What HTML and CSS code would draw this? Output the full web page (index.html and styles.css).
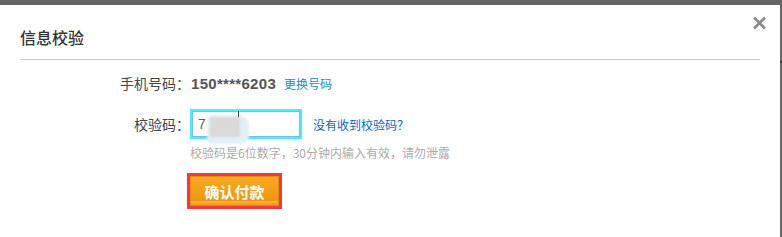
FILE: index.html
```html
<!DOCTYPE html>
<html lang="zh-CN">
<head>
    <meta charset="UTF-8">
    <title>信息校验</title>
    <link rel="stylesheet" href="styles.css">
</head>
<body>
    <div class="dialog">
        <div class="dialog-head">
            <h2>信息校验</h2>
        </div>
        <a class="close-btn" href="#" title="关闭">
            <svg width="15" height="14" viewBox="0 0 15 14">
                <path d="M2 1.5 L13 12.5 M13 1.5 L2 12.5" stroke="#8a8a8a" stroke-width="2.6" fill="none"/>
            </svg>
        </a>
        <span class="edge-mark"></span>

        <div class="verify-form">
            <div class="row phone-row">
                <label>手机号码：</label>
                <div class="field">
                    <span class="phone">150****6203</span>
                    <a href="#" class="link change-link">更换号码</a>
                </div>
            </div>

            <div class="row code-row">
                <label>校验码：</label>
                <div class="field">
                    <div class="code-wrap">
                        <input type="text" class="code-input" value="7" readonly>
                        <!-- mosaic over the rest of the code -->
                        <span class="smudge"></span>
                        <span class="caret"></span>
                    </div>
                    <a href="#" class="link resend-link">没有收到校验码？</a>
                </div>
            </div>

            <div class="row hint-row">
                <span></span>
                <p class="hint">校验码是6位数字，30分钟内输入有效，请勿泄露</p>
            </div>

            <div class="row btn-row">
                <span></span>
                <div class="field">
                    <button class="pay-btn">确认付款</button>
                </div>
            </div>
        </div>
    </div>
</body>
</html>
```

FILE: styles.css
```css
html, body {
    margin: 0;
    height: 100%;
}

body {
    background-color: #666;
    font-family: "Noto Sans CJK SC", "Liberation Sans", sans-serif;
    overflow: hidden;
}

.dialog {
    position: relative;
    margin: 5px 2px 0 0;
    height: 232px;
    background-color: #fff;
}

.dialog-head {
    margin: 0 20px;
    height: 54px;
    border-bottom: 1px solid #ccc;
}

.dialog-head h2 {
    margin: 0;
    padding-top: 21px;
    font-size: 16px;
    line-height: 22px;
    font-weight: 500;
    color: #333;
}

.close-btn {
    position: absolute;
    top: 11px;
    right: 13px;
    width: 15px;
    height: 14px;
    display: block;
}

.close-btn svg {
    display: block;
}

.edge-mark {
    position: absolute;
    right: -2px;
    top: 56px;
    width: 2px;
    height: 2px;
    background-color: #334;
}

.verify-form {
    padding-top: 13px;
}

.row {
    display: grid;
    grid-template-columns: 190px 1fr;
    align-items: center;
}

.row label {
    text-align: right;
    font-size: 14px;
    color: #444;
    white-space: nowrap;
}

.field {
    display: flex;
    align-items: center;
}

.phone-row {
    height: 20px;
}

.phone {
    font-family: "Liberation Sans", sans-serif;
    font-weight: bold;
    font-size: 15px;
    letter-spacing: 0.3px;
    color: #555;
    margin-left: 1px;
}

.link {
    font-size: 12px;
    text-decoration: none;
}

.change-link {
    color: #1a8bd0;
    margin-left: 8px;
}

.code-row {
    margin-top: 16px;
    height: 30px;
}

.code-wrap {
    position: relative;
    width: 112px;
    height: 30px;
}

.code-input {
    width: 112px;
    height: 30px;
    box-sizing: border-box;
    margin: 0;
    padding: 0 0 0 6px;
    border: 2px solid #3ef3ff;
    box-shadow: inset 0 0 0 1px #7ab8ff;
    outline: none;
    font-family: "Liberation Sans", sans-serif;
    font-size: 14px;
    color: #6b5a4a;
}

.smudge {
    position: absolute;
    left: 17px;
    top: 6px;
    width: 42px;
    height: 29px;
    background:
        linear-gradient(#dadada, #dadada) 3px 2px / 30px 20px no-repeat,
        #e2f0f6;
    border-radius: 6px 10px 8px 4px;
    filter: blur(0.8px);
}

.caret {
    position: absolute;
    left: 48px;
    top: 2px;
    width: 1px;
    height: 6px;
    background-color: #444;
}

.resend-link {
    color: #0a66cc;
    margin-left: 11px;
}

.hint-row {
    margin-top: 5px;
}

.hint {
    margin: 0;
    font-size: 12px;
    line-height: 18px;
    color: #aaa;
}

.btn-row {
    margin-top: 14px;
}

.pay-btn {
    width: 89px;
    height: 30px;
    padding: 0;
    border: 1px solid #e88c0c;
    outline: 3px solid #f23a3a;
    background: linear-gradient(#f7a923, #ef960f 85%, #f8b548 86%, #f09a14);
    color: #fff;
    font-family: "Noto Sans CJK SC", sans-serif;
    font-weight: bold;
    font-size: 15px;
    cursor: pointer;
}
```
